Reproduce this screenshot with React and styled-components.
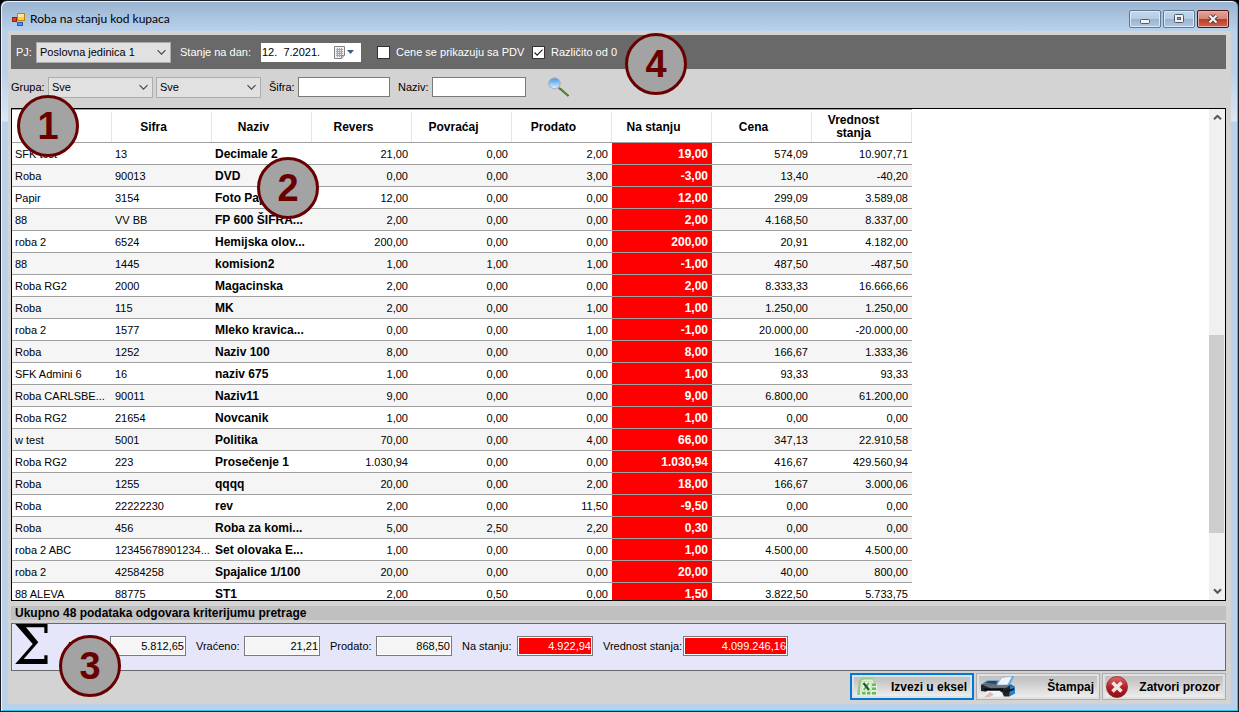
import React from "react";
import styled, { createGlobalStyle, css } from "styled-components";

const GlobalStyle = createGlobalStyle`
  * { box-sizing: border-box; }
  body {
    margin: 0;
    background: #000;
    color: #000;
    font: 11px/16px "Liberation Sans", sans-serif;
  }
  button, input, select { font: inherit; color: inherit; margin: 0; border-radius: 0; }
`;

const boldText = css`
  font: bold 12px/14px "Liberation Sans", sans-serif;
`;

const Window = styled.div`
  position: relative;
  display: flex;
  flex-direction: column;
  height: 100vh;
  border: 1px solid #1c1c22;
  border-radius: 7px 7px 0 0;
  padding: 0 7px 7px;
  background:
    linear-gradient(#99b4d1, #b9d1ea 30px, #b9d1ea 70px, #dbe7f4 120px, #b9d1ea 121px);
  box-shadow: inset 1px 1px 0 #eef4fb, inset -1px -1px 0 #2cc5e4;
`;

const TitleBar = styled.header`
  display: flex;
  align-items: center;
  height: 30px;
  flex: none;
  padding: 6px 2px 0 4px;
  gap: 5px;
`;

const Title = styled.h1`
  flex: 1;
  margin: 0;
  font: 12px/16px Lato, "Open Sans", sans-serif;
`;

const CaptionButtons = styled.div`
  display: flex;
  gap: 2px;
`;

const CaptionButton = styled.button`
  display: grid;
  place-items: center;
  width: 32px;
  height: 18px;
  padding: 0;
  border: 1px solid ${(p) => (p.$close ? "#4a1420" : "#5f7896")};
  border-radius: 2px;
  box-shadow: inset 0 0 0 1px ${(p) => (p.$close ? "#e9b0a8" : "#dbe8f6")};
  background: ${(p) =>
    p.$close
      ? "linear-gradient(#e3a395, #d58574 50%, #b83a26 50%, #cd6650)"
      : "linear-gradient(#c3d6ea, #b6cce4 50%, #98b3d0 50%, #b0c8e2)"};
`;

const Client = styled.main`
  flex: 1;
  min-height: 0;
  display: flex;
  flex-direction: column;
  padding: 4px 5px 4px 3px;
  background: #d3d3d3;
`;

const Toolbar = styled.div`
  display: flex;
  align-items: center;
  flex: none;
  height: 34px;
  padding: 0 5px;
  background: #696969;
  color: #fff;
`;

const FilterBar = styled.div`
  display: flex;
  align-items: center;
  flex: none;
  height: 39px;
  padding-bottom: 3px;
`;

const Label = styled.label`
  flex: none;
  width: ${(p) => p.$w}px;
  white-space: nowrap;
`;

const SelectBox = styled.span`
  display: grid;
  align-items: center;
  width: ${(p) => p.$w}px;
  height: 21px;
  margin-right: ${(p) => p.$gap}px;
  color: #000;
  select, svg { grid-area: 1 / 1; }
  select {
    appearance: none;
    width: 100%;
    height: 21px;
    padding: 0 20px 0 3px;
    border: 1px solid #adadad;
    background: #e1e1e1;
  }
  svg { justify-self: end; margin-right: 4px; pointer-events: none; }
`;

const DateBox = styled.span`
  display: flex;
  align-items: center;
  width: 100px;
  height: 19px;
  margin-right: 16px;
  background: #fff;
  color: #000;
  input { width: 73px; padding: 0 0 0 1px; border: 0; background: none; outline: 0; }
  button { display: flex; padding: 0; border: 0; background: none; }
`;

const CheckLabel = styled.label`
  display: flex;
  align-items: center;
  gap: 6px;
  width: ${(p) => p.$w}px;
  white-space: nowrap;
`;

const CheckInput = styled.input`
  appearance: none;
  flex: none;
  width: 13px;
  height: 13px;
  border: 1px solid #333;
  background: #fff;
  &:checked {
    background: #fff url("data:image/svg+xml,%3Csvg xmlns='http://www.w3.org/2000/svg' viewBox='0 0 11 11'%3E%3Cpath d='M1.5 5.5l2.7 2.7L9.5 2.7' fill='none' stroke='%23222' stroke-width='1.2'/%3E%3C/svg%3E");
  }
`;

const TextBox = styled.input`
  width: ${(p) => p.$w}px;
  height: 20px;
  margin-right: ${(p) => p.$gap}px;
  padding: 0 3px;
  border: 1px solid #7a7a7a;
  background: #fff;
`;

const IconButton = styled.button`
  display: flex;
  padding: 0;
  border: 0;
  background: none;
`;

const GridPanel = styled.section`
  flex: 1;
  min-height: 0;
  display: flex;
  justify-content: space-between;
  overflow: hidden;
  border: 1px solid #000;
  background: #fff;
`;

const TableClip = styled.div`
  overflow: hidden;
`;

const Table = styled.table`
  width: 900px;
  table-layout: fixed;
  border-collapse: separate;
  border-spacing: 0;
`;

const HeadCell = styled.th`
  ${boldText}
  line-height: 13px;
  height: 34px;
  padding: 2px 17px 0 0;
  border-top: 1px solid #a0a0a0;
  border-bottom: 1px solid #a0a0a0;
  background: linear-gradient(#e5e5e5, #e5e5e5) right bottom / 1px 30px no-repeat;
`;

const Row = styled.tr`
  background: ${(p) => (p.$alt ? "#f5f5f5" : "#fff")};
`;

const Cell = styled.td`
  height: 22px;
  padding: 0 4px 0 3px;
  border-bottom: 1px solid #a0a0a0;
  line-height: 16px;
  white-space: nowrap;
  overflow: hidden;
  text-align: ${(p) => (p.$num ? "right" : "left")};
`;

const NameCell = styled(Cell)`
  ${boldText}
`;

const StockCell = styled(Cell)`
  background: #f00;
  color: #fff;
  font: bold 12px/16px "Liberation Sans", sans-serif;
`;

const ScrollBar = styled.div`
  display: grid;
  grid-template-rows: 17px 209fr 198fr 50fr 17px;
  width: 16px;
  background: #f0f0f0;
`;

const ScrollButton = styled.button`
  display: grid;
  place-items: center;
  padding: 0;
  border: 0;
  background: none;
  &:last-child { grid-row: 5; }
`;

const Thumb = styled.div`
  grid-row: 3;
  width: 15px;
  background: #cdcdcd;
`;

const StatusBar = styled.p`
  ${boldText}
  flex: none;
  height: 14px;
  margin: 5px 0 3px;
  padding-left: 4px;
  background: #c0c0c0;
`;

const Summary = styled.section`
  display: flex;
  align-items: center;
  flex: none;
  height: 48px;
  padding-bottom: 2px;
  gap: 10px;
  border: 1px solid #696969;
  background: #e6e6fa;
`;

const Sigma = styled.span`
  width: 46px;
  padding-left: 1px;
  font: 54px/44px "DejaVu Serif", serif;
`;

const Field = styled.div`
  display: flex;
  align-items: center;
`;

const Total = styled.input`
  width: ${(p) => p.$w}px;
  height: 20px;
  padding: 0 1px;
  border: 1px solid #7a7a7a;
  box-shadow: inset 0 0 0 1px #fff;
  background: ${(p) => (p.$hot ? "#f00" : "#f5f5f5")};
  color: ${(p) => (p.$hot ? "#fff" : "#000")};
  text-align: right;
`;

const Actions = styled.footer`
  display: flex;
  justify-content: flex-end;
  flex: none;
  gap: 2px;
  padding-top: 2px;
`;

const ActionButton = styled.button`
  ${boldText}
  display: flex;
  align-items: center;
  justify-content: space-between;
  width: 124px;
  height: 27px;
  padding: 0 5px 0 ${(p) => (p.$focus ? 4 : 3)}px;
  border: ${(p) => (p.$focus ? "2px solid #0078d7" : "1px solid #adadad")};
  box-shadow: inset 0 0 0 2px #e1e1e1;
  background: linear-gradient(#bebebe, #c9c9c9 30%, #f2f2f2);
`;

const Callout = styled.span`
  position: absolute;
  left: ${(p) => p.$x}px;
  ${(p) => (p.$bottom !== undefined ? `bottom: ${p.$bottom}px;` : `top: ${p.$y}px;`)}
  width: 62px;
  height: 62px;
  border: 3px solid #690000;
  border-radius: 50%;
  background: #a3a3a3;
  color: #690000;
  text-align: center;
  font: bold 38px/56px "Liberation Sans", sans-serif;
`;

const Chevron = () => (
  <svg width="11" height="7" viewBox="0 0 11 7">
    <path d="M1.5 1.2l4 4 4-4" fill="none" stroke="#444" strokeWidth="1.1" />
  </svg>
);

const ScrollArrow = ({ up }) => (
  <svg width="9" height="7" viewBox="0 0 9 7">
    <path d={up ? "M1 5.3l3.5-3.5L8 5.3" : "M1 1.3l3.5 3.5L8 1.3"} fill="none" stroke="#555" strokeWidth="2" />
  </svg>
);

const AppIcon = () => (
  <svg width="13" height="13" viewBox="0 0 13 13">
    <rect x="5.5" y="0.5" width="7" height="7" fill="#ffce3c" stroke="#b98513" />
    <rect x="6" y="1" width="6" height="3" fill="#ffe58c" />
    <rect x="0.5" y="4.5" width="4" height="4" fill="#e03c20" stroke="#9c1c10" />
    <rect x="5.5" y="9.5" width="5" height="3" fill="#5a92e8" stroke="#2a58b4" />
  </svg>
);

const CalendarIcon = () => (
  <svg width="21" height="13" viewBox="0 0 21 13">
    <path d="M.5 .5h10v9l-3 3h-7z" fill="#f2f2f4" stroke="#85808a" />
    <path d="M2 3.5h7M2 5.5h7M2 7.5h7M2 9.5h5M3.5 2v9M5.5 2v9M7.5 2v8" stroke="#a3a0b0" strokeWidth="1" />
    <path d="M10.5 9.5h-3v3" fill="#d8d0d0" stroke="#85808a" />
    <path d="M13 4h7l-3.500 4z" fill="#3b5a94" />
  </svg>
);

const SearchIcon = () => (
  <svg width="22" height="20" viewBox="0 0 22 20">
    <defs>
      <linearGradient id="lens" x1="0" y1="0" x2="0" y2="1">
        <stop offset="0" stopColor="#3f93e6" />
        <stop offset=".5" stopColor="#8cc4f6" />
        <stop offset="1" stopColor="#e6f6ff" />
      </linearGradient>
    </defs>
    <path d="M10.500 10.500l2 2" stroke="#777" strokeWidth="2" />
    <path d="M12 11.500l8.500 7.500" stroke="#2f6b12" strokeWidth="2" />
    <path d="M12.500 11.500l7.500 6.800" stroke="#7cb440" strokeWidth="0.800" />
    <ellipse cx="6.500" cy="6.300" rx="5.700" ry="5.500" fill="url(#lens)" stroke="#a9b2c2" strokeWidth="1.200" />
  </svg>
);

const ExcelIcon = () => (
  <svg width="22" height="20" viewBox="0 0 22 20">
    <path d="M4 1h14q-1 3 1 5l2 1v12H1z" fill="#e4eede" />
    <path d="M1 18Q2 8 3 4Q4 .8 7 .8h11v1.600H8Q5.500 2.600 5 5Q4 10 4 18z" fill="#93cc80" />
    <path d="M17 1q0 4 2.500 5.500" fill="none" stroke="#a6d496" strokeWidth="1.200" />
    <path d="M6.500 4.500h8.500v9.500H5.500z" fill="#f0f7ec" stroke="#b6d8a8" strokeWidth=".8" />
    <path d="M12.800 6l-5 7" stroke="#6db35f" strokeWidth="2" />
    <path d="M7.500 6l5.500 7" stroke="#245e2a" strokeWidth="2.400" />
    <path d="M16 6.500h4v2.500h-4zM16 10.500h4v2.500h-4zM16 15h4v2.500h-4zM11 15h3.500v2.500H11zM6 15h3.500v2.500H6z" fill="#6fb45e" />
  </svg>
);

const PrinterIcon = () => (
  <svg width="36" height="22" viewBox="0 0 36 22">
    <path d="M1 8.500l6-4h12l-2 4z" fill="#2d8fdc" />
    <path d="M5 7l4-2h8l-1 3z" fill="#39434d" />
    <path d="M1 8.500h30l4 2.500v6l-6 3.500h-5l-2-4.500H9L1 15z" fill="#20252c" />
    <path d="M3 9l12-.5 15 1-4 2.500-15 .5z" fill="#66727e" />
    <path d="M17 9L21.500 1.500 34 0l-4.500 9z" fill="#eef5fa" stroke="#8fa9bd" strokeWidth=".7" />
    <path d="M32 .3L34 0l-4.500 9h-2z" fill="#4fa9e6" />
    <path d="M30 9l5 2v6.500l-6 3 1-7z" fill="#2583d2" />
    <path d="M25 15l9-3v2l-9 3z" fill="#11161c" />
    <path d="M7 14.500h13l3 5.500-19 1z" fill="#f1f5f9" />
    <path d="M4 21l6-5 4 2.500-4 2.500z" fill="#e4b9b5" />
    <path d="M3 12.500h20v2H5z" fill="#06080b" />
  </svg>
);

const CloseIcon = () => (
  <svg width="22" height="22" viewBox="0 0 22 22">
    <defs>
      <linearGradient id="danger" x1="0" y1="0" x2="0" y2="1">
        <stop offset="0" stopColor="#dd6b68" />
        <stop offset=".5" stopColor="#b92026" />
        <stop offset="1" stopColor="#8b0d12" />
      </linearGradient>
    </defs>
    <circle cx="11" cy="11" r="10.500" fill="url(#danger)" stroke="#962226" strokeWidth=".8" />
    <path d="M6.500 6.500l9 9M15.500 6.500l-9 9" stroke="#f0e6e6" strokeWidth="3.600" />
  </svg>
);

const MinimizeGlyph = () => (
  <svg width="12" height="12" viewBox="0 0 12 12">
    <rect x="1.500" y="6.500" width="9" height="4" rx="1" fill="#f3f3f3" stroke="#525a66" />
  </svg>
);

const MaximizeGlyph = () => (
  <svg width="12" height="10" viewBox="0 0 12 10">
    <rect x="1.500" y=".5" width="9" height="8" rx="1" fill="#f3f3f3" stroke="#525a66" />
    <rect x="4.500" y="3.500" width="3" height="2" fill="#98b3d0" stroke="#525a66" />
  </svg>
);

const CloseGlyph = () => (
  <svg width="12" height="10" viewBox="0 0 12 10">
    <path d="M2.500 1.500l7 7M9.500 1.500l-7 7" stroke="#57343a" strokeWidth="4" />
    <path d="M2.500 1.500l7 7M9.500 1.500l-7 7" stroke="#f6f6f6" strokeWidth="2.200" />
  </svg>
);

const columns = ["Grupa", "Sifra", "Naziv", "Revers", "Povraćaj", "Prodato", "Na stanju", "Cena", "Vrednost stanja"];

const rows = [
  ["SFK test", "13", "Decimale 2", "21,00", "0,00", "2,00", "19,00", "574,09", "10.907,71"],
  ["Roba", "90013", "DVD", "0,00", "0,00", "3,00", "-3,00", "13,40", "-40,20"],
  ["Papir", "3154", "Foto Papir", "12,00", "0,00", "0,00", "12,00", "299,09", "3.589,08"],
  ["88", "VV BB", "FP 600 ŠIFRA...", "2,00", "0,00", "0,00", "2,00", "4.168,50", "8.337,00"],
  ["roba 2", "6524", "Hemijska olov...", "200,00", "0,00", "0,00", "200,00", "20,91", "4.182,00"],
  ["88", "1445", "komision2", "1,00", "1,00", "1,00", "-1,00", "487,50", "-487,50"],
  ["Roba RG2", "2000", "Magacinska", "2,00", "0,00", "0,00", "2,00", "8.333,33", "16.666,66"],
  ["Roba", "115", "MK", "2,00", "0,00", "1,00", "1,00", "1.250,00", "1.250,00"],
  ["roba 2", "1577", "Mleko kravica...", "0,00", "0,00", "1,00", "-1,00", "20.000,00", "-20.000,00"],
  ["Roba", "1252", "Naziv 100", "8,00", "0,00", "0,00", "8,00", "166,67", "1.333,36"],
  ["SFK Admini 6", "16", "naziv 675", "1,00", "0,00", "0,00", "1,00", "93,33", "93,33"],
  ["Roba CARLSBE...", "90011", "Naziv11", "9,00", "0,00", "0,00", "9,00", "6.800,00", "61.200,00"],
  ["Roba RG2", "21654", "Novcanik", "1,00", "0,00", "0,00", "1,00", "0,00", "0,00"],
  ["w test", "5001", "Politika", "70,00", "0,00", "4,00", "66,00", "347,13", "22.910,58"],
  ["Roba RG2", "223", "Prosečenje 1", "1.030,94", "0,00", "0,00", "1.030,94", "416,67", "429.560,94"],
  ["Roba", "1255", "qqqq", "20,00", "0,00", "2,00", "18,00", "166,67", "3.000,06"],
  ["Roba", "22222230", "rev", "2,00", "0,00", "11,50", "-9,50", "0,00", "0,00"],
  ["Roba", "456", "Roba za komi...", "5,00", "2,50", "2,20", "0,30", "0,00", "0,00"],
  ["roba 2 ABC", "12345678901234...", "Set olovaka E...", "1,00", "0,00", "0,00", "1,00", "4.500,00", "4.500,00"],
  ["roba 2", "42584258", "Spajalice 1/100", "20,00", "0,00", "0,00", "20,00", "40,00", "800,00"],
  ["88 ALEVA", "88775", "ST1", "2,00", "0,50", "0,00", "1,50", "3.822,50", "5.733,75"],
];

const totals = [
  { id: "revers", label: "Revers:", value: "5.812,65", labelWidth: 42, width: 76 },
  { id: "vraceno", label: "Vraćeno:", value: "21,21", labelWidth: 48, width: 76 },
  { id: "prodato", label: "Prodato:", value: "868,50", labelWidth: 46, width: 76 },
  { id: "stanje", label: "Na stanju:", value: "4.922,94", labelWidth: 55, width: 76, hot: true },
  { id: "vrednost", label: "Vrednost stanja:", value: "4.099.246,16", labelWidth: 80, width: 105, hot: true },
];

function Combo({ id, value, width, gap, label }) {
  return (
    <SelectBox $w={width} $gap={gap}>
      <select id={id} aria-label={label} defaultValue={value}>
        <option>{value}</option>
      </select>
      <Chevron />
    </SelectBox>
  );
}

function DataCell({ index, value }) {
  if (index === 2) return <NameCell>{value}</NameCell>;
  if (index === 6) return <StockCell $num>{value}</StockCell>;
  return <Cell $num={index > 2}>{value}</Cell>;
}

export default function App() {
  return (
    <>
      <GlobalStyle />
      <Window>
        <TitleBar>
          <AppIcon />
          <Title>Roba na stanju kod kupaca</Title>
          <CaptionButtons>
            <CaptionButton aria-label="Minimize"><MinimizeGlyph /></CaptionButton>
            <CaptionButton aria-label="Maximize"><MaximizeGlyph /></CaptionButton>
            <CaptionButton $close aria-label="Close"><CloseGlyph /></CaptionButton>
          </CaptionButtons>
        </TitleBar>

        <Client>
          <Toolbar>
            <Label $w={20} htmlFor="pj">PJ:</Label>
            <Combo id="pj" value="Poslovna jedinica 1" width={135} gap={9} />
            <Label $w={81} htmlFor="datum">Stanje na dan:</Label>
            <DateBox>
              <input id="datum" defaultValue="12.  7.2021." />
              <button aria-label="Kalendar"><CalendarIcon /></button>
            </DateBox>
            <CheckLabel $w={155}>
              <CheckInput type="checkbox" />
              Cene se prikazuju sa PDV
            </CheckLabel>
            <CheckLabel $w={90}>
              <CheckInput type="checkbox" defaultChecked />
              Različito od 0
            </CheckLabel>
          </Toolbar>

          <FilterBar>
            <Label $w={37} htmlFor="grupa">Grupa:</Label>
            <Combo id="grupa" value="Sve" width={105} gap={3} />
            <Combo label="Podgrupa" value="Sve" width={105} gap={8} />
            <Label $w={29} htmlFor="sifra">Šifra:</Label>
            <TextBox id="sifra" $w={92} $gap={8} />
            <Label $w={34} htmlFor="naziv">Naziv:</Label>
            <TextBox id="naziv" $w={94} $gap={22} />
            <IconButton aria-label="Traži"><SearchIcon /></IconButton>
          </FilterBar>

          <GridPanel>
            <TableClip>
              <Table>
                <thead>
                  <tr>
                    {columns.map((name) => <HeadCell key={name}>{name}</HeadCell>)}
                  </tr>
                </thead>
                <tbody>
                  {rows.map((row, r) => (
                    <Row key={r} $alt={r % 2 === 1}>
                      {row.map((value, c) => <DataCell key={c} index={c} value={value} />)}
                    </Row>
                  ))}
                </tbody>
              </Table>
            </TableClip>
            <ScrollBar>
              <ScrollButton aria-label="Gore"><ScrollArrow up /></ScrollButton>
              <Thumb />
              <ScrollButton aria-label="Dole"><ScrollArrow /></ScrollButton>
            </ScrollBar>
          </GridPanel>

          <StatusBar>Ukupno 48 podataka odgovara kriterijumu pretrage</StatusBar>

          <Summary>
            <Sigma>Σ</Sigma>
            {totals.map((t) => (
              <Field key={t.id}>
                <Label $w={t.labelWidth} htmlFor={t.id}>{t.label}</Label>
                <Total id={t.id} $w={t.width} $hot={t.hot} readOnly value={t.value} />
              </Field>
            ))}
          </Summary>

          <Actions>
            <ActionButton $focus><ExcelIcon />Izvezi u eksel</ActionButton>
            <ActionButton><PrinterIcon />Štampaj</ActionButton>
            <ActionButton><CloseIcon />Zatvori prozor</ActionButton>
          </Actions>
        </Client>

        <Callout $x={16} $y={94}>1</Callout>
        <Callout $x={256} $y={156}>2</Callout>
        <Callout $x={58} $bottom={14}>3</Callout>
        <Callout $x={624} $y={32}>4</Callout>
      </Window>
    </>
  );
}
